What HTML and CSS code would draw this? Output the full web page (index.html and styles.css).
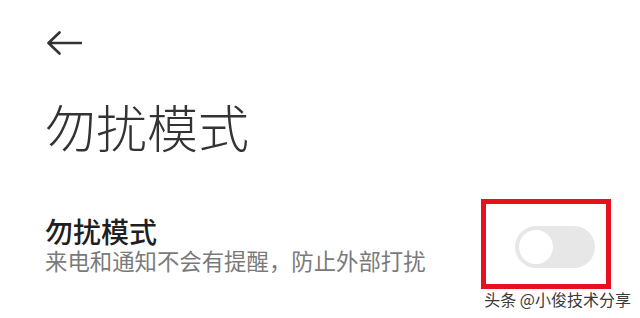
FILE: index.html
```html
<!DOCTYPE html>
<html lang="zh-CN">
<head>
<meta charset="utf-8">
<link rel="stylesheet" href="styles.css">
</head>
<body>
<div class="page">
  <header class="topbar">
    <svg class="back" width="36" height="24" viewBox="0 0 36 24" aria-label="返回">
      <path d="M35 12 H2.5 M13.5 1.5 L2.5 12 L13.5 22.5" fill="none" stroke="#333" stroke-width="2.6" stroke-linecap="round" stroke-linejoin="round"/>
    </svg>
  </header>
  <h1 class="title">勿扰模式</h1>
  <div class="row">
    <div class="row-text">
      <div class="row-title">勿扰模式</div>
      <div class="row-sub">来电和通知不会有提醒，防止外部打扰</div>
    </div>
    <div class="switch"><span class="knob"></span></div>
  </div>
</div>
<div class="highlight"></div>
<div class="watermark">头条 @小俊技术分享</div>
</body>
</html>
```
FILE: styles.css
```css
html, body {
  margin: 0;
  padding: 0;
  background: #ffffff;
}
body {
  width: 640px;
  height: 318px;
  overflow: hidden;
  position: relative;
  font-family: "Noto Sans CJK SC", "Noto Sans", sans-serif;
}
.page {
  padding: 31px 45px 0 45px;
}
.topbar {
  height: 24px;
  display: flex;
  align-items: center;
}
.back {
  display: block;
  margin-left: 1px;
}
.title {
  margin: 46px 0 0 0;
  font-size: 51px;
  line-height: 51px;
  font-weight: 300;
  color: #333333;
  letter-spacing: 0;
}
.row {
  margin-top: 68px;
  display: flex;
  justify-content: space-between;
  align-items: flex-start;
}
.row-text {
  font-family: "Liberation Sans", "Noto Sans CJK SC", sans-serif;
}
.row-title {
  font-size: 28px;
  line-height: 28px;
  font-weight: 500;
  color: #1f1f1f;
}
.row-sub {
  margin-top: 3px;
  font-size: 22.4px;
  line-height: 23px;
  color: #7a7a7a;
}
.switch {
  margin-top: 6px;
  width: 80px;
  height: 42px;
  border-radius: 21px;
  background: #e7e7e7;
  box-sizing: border-box;
  padding: 4px;
  display: flex;
  align-items: center;
}
.knob {
  width: 34px;
  height: 34px;
  border-radius: 50%;
  background: #ffffff;
}
.highlight {
  position: absolute;
  left: 481px;
  top: 199px;
  width: 130px;
  height: 90px;
  box-sizing: border-box;
  border: 5px solid #e8101e;
}
.watermark {
  position: absolute;
  right: 9px;
  top: 290px;
  font-size: 16px;
  line-height: 18px;
  color: #3a3a3a;
  white-space: nowrap;
  text-shadow: 0 0 2px #fff, 0 0 1px #fff;
}
```
